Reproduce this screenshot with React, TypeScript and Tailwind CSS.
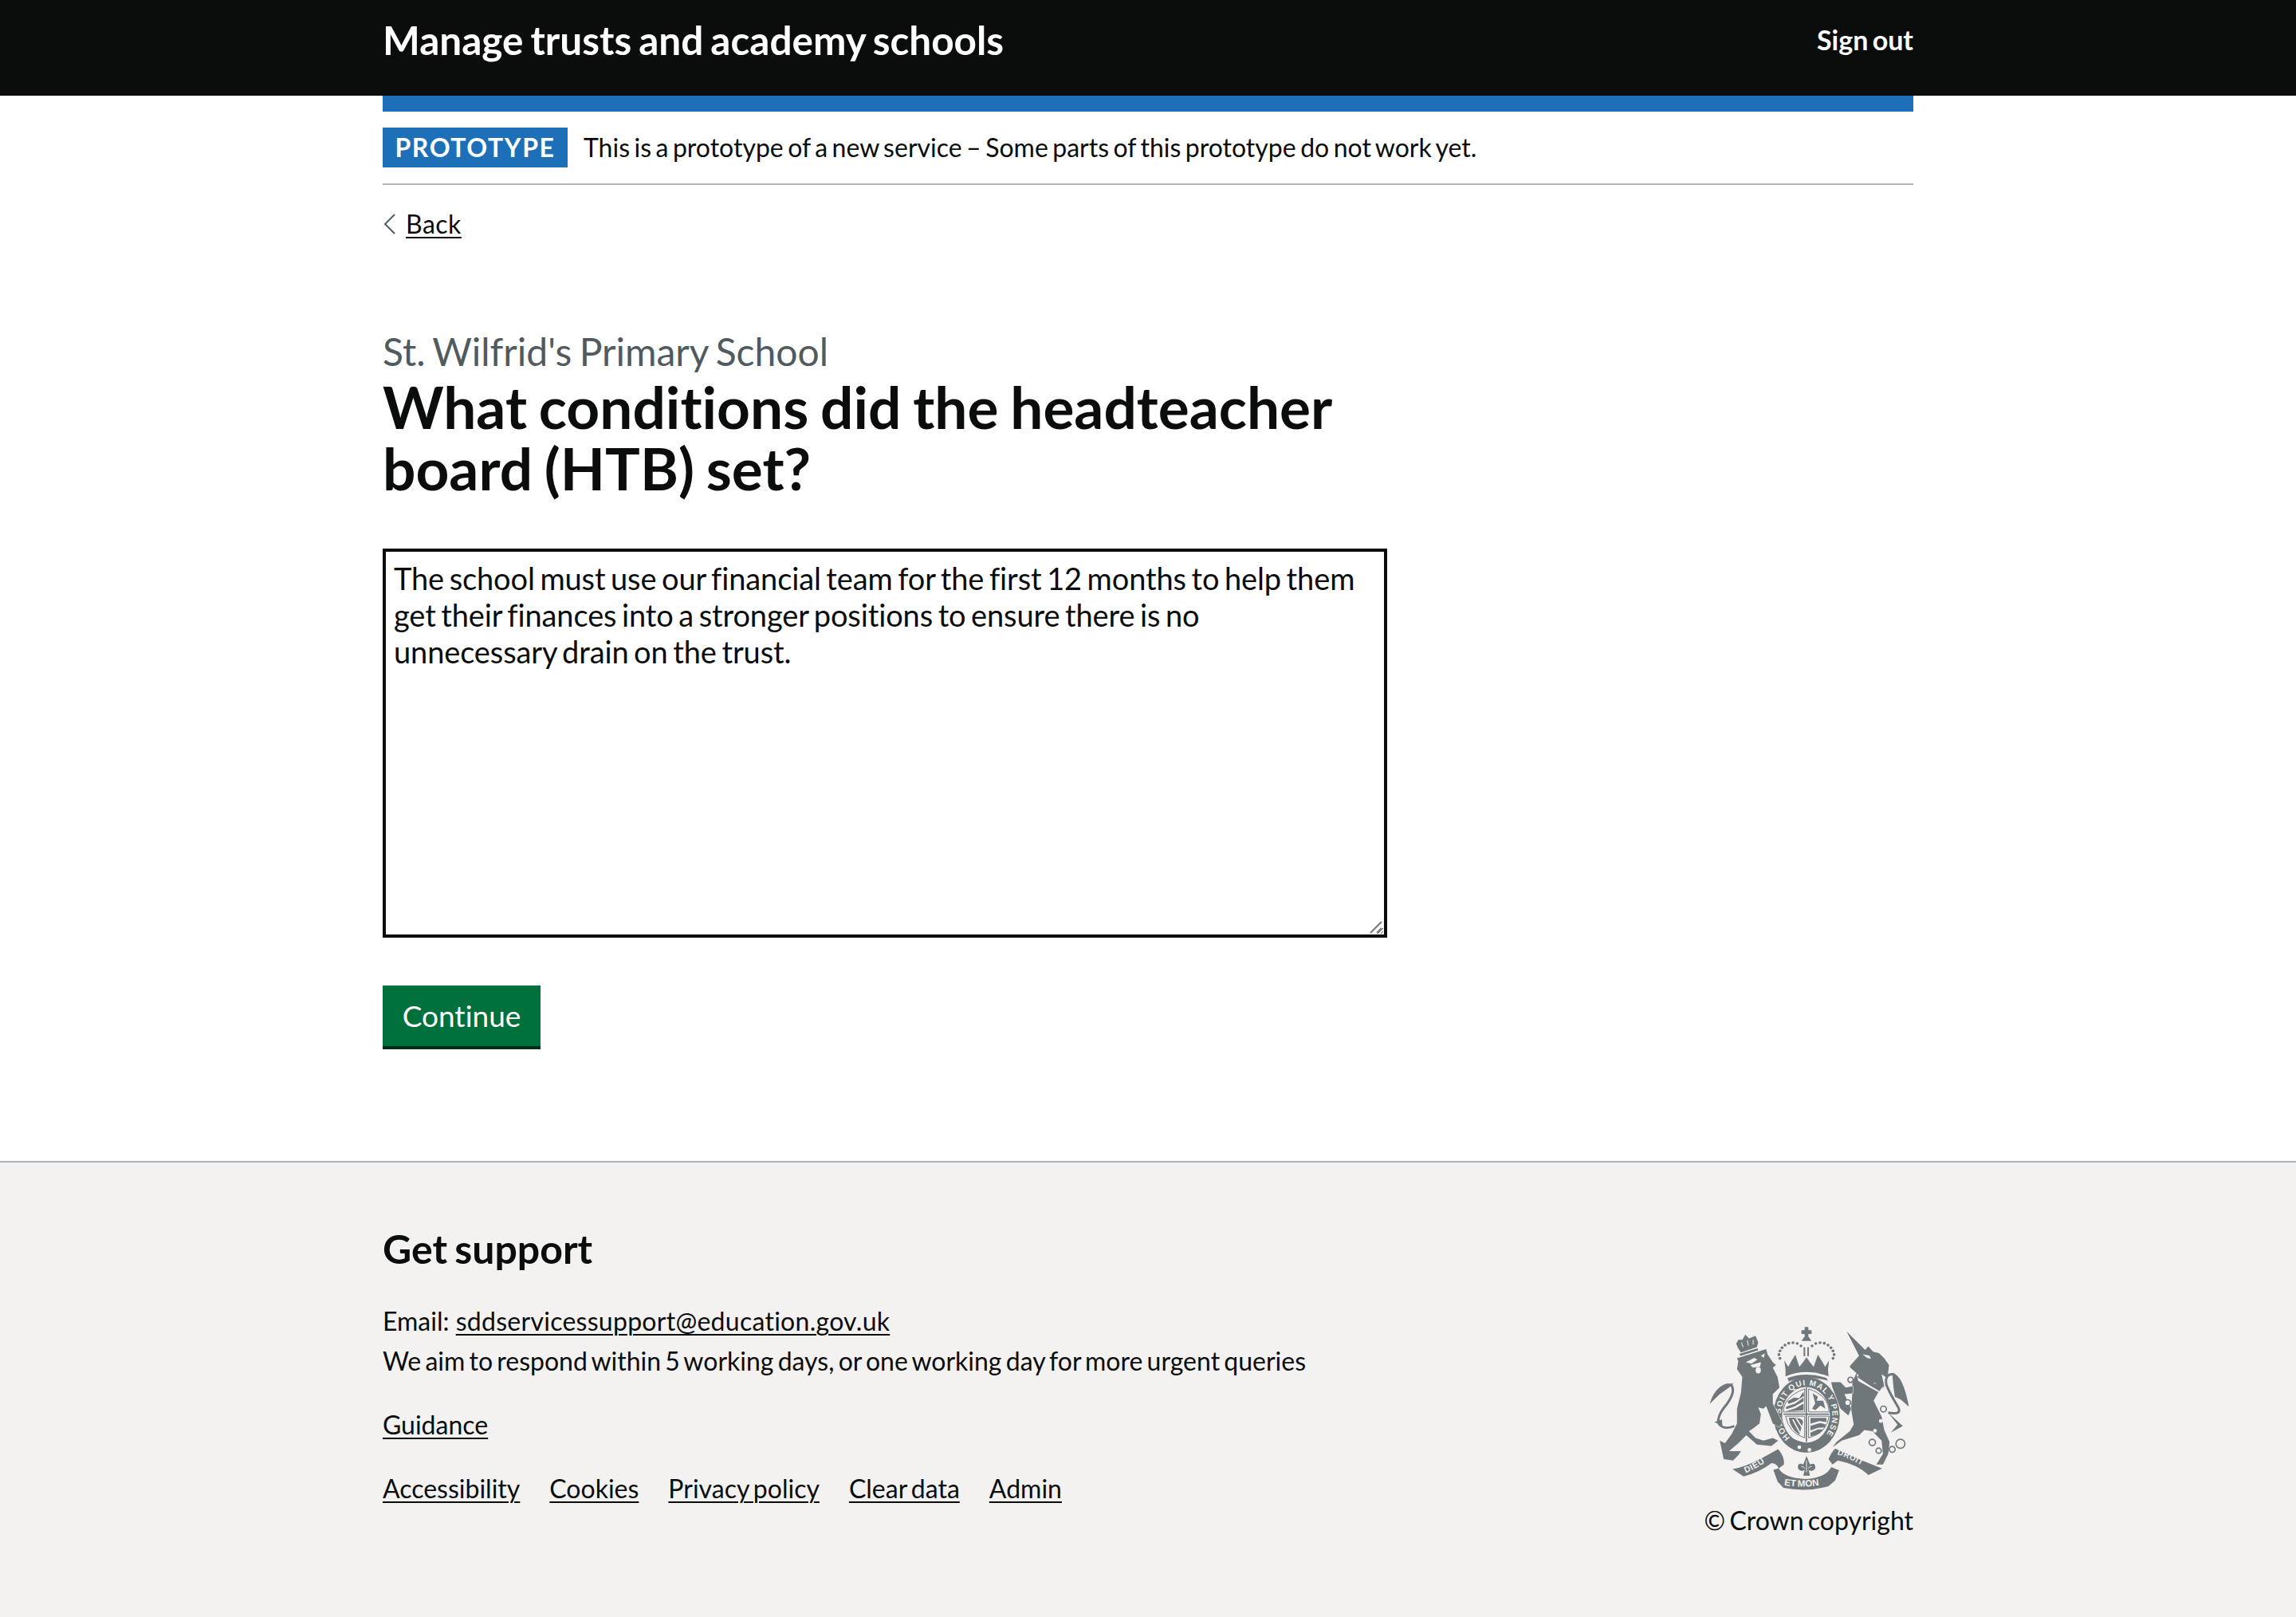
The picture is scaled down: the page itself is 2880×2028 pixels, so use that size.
import React from "react";

const G = "#6f777b";
const BG = "#f3f2f1";
const LABEL = "Liberation Sans, sans-serif";

function Crest() {
  return (
    <svg viewBox="125 65 765 625" className="w-[255px] h-[208px] block mr-[3px]" fill={G}>
      <defs>
        <path id="garter" d="M435 489 A97 112 0 1 1 560 489" />
        <path id="dieu" d="M268 622 Q320 600 372 560" />
        <path id="droit" d="M612 552 Q670 570 735 612" />
        <path id="etmon" d="M412 668 Q497 682 586 660" />
      </defs>

      {/* shield garter */}
      <ellipse cx="497" cy="403" rx="125" ry="142" />
      <ellipse cx="495" cy="403" rx="90" ry="105" fill={BG} />
      <text fontFamily={LABEL} fontWeight="700" fontSize="30" fill={BG}>
        <textPath href="#garter" textLength="500" lengthAdjust="spacing">HONI SOIT QUI MAL Y PENSE</textPath>
      </text>

      {/* shield quarters */}
      <path d="M410 392 Q410 335 490 305 V392 Z" fill="none" stroke={G} strokeWidth="3" />
      <path d="M425 352 L450 338 L470 340 L485 316 L488 332 L455 352 L430 362 Z M420 372 L455 360 L486 338 V352 L450 372 L420 382 Z M418 390 L455 378 L486 360 V386 Z" />
      <path d="M505 305 Q580 330 582 392 H505 Z" fill="none" stroke={G} strokeWidth="3" />
      <path d="M520 322 L540 335 L535 350 L560 350 L568 380 L550 368 L530 385 L518 380 L530 360 Z" />
      <path d="M418 408 H490 V490 Q430 470 418 408 Z" fill="none" stroke={G} strokeWidth="3" />
      <path d="M430 414 Q482 410 484 430 L470 478 Q436 455 430 414 Z" />
      <path d="M445 420 L472 470 M458 415 L480 450" stroke={BG} strokeWidth="5" fill="none" />
      <path d="M505 408 H582 Q575 470 505 490 Z" fill="none" stroke={G} strokeWidth="3" />
      <path d="M512 414 H572 V430 L545 426 L512 436 Z M512 444 L548 434 L568 438 V450 L540 452 L512 462 Z M512 470 L540 458 L560 458 L546 474 L512 484 Z" />
      <rect x="494" y="300" width="5" height="205" />
      <rect x="410" y="398" width="172" height="5" />

      {/* garter buckle */}
      <path d="M425 498 L440 490 Q497 520 560 505 L575 512 Q510 560 450 535 Z" />
      <circle cx="470" cy="525" r="7" fill={BG} />
      <circle cx="508" cy="535" r="7" fill={BG} />

      {/* main crown */}
      <path d="M490 72 H504 V84 H516 V98 H504 V108 L516 124 H478 L490 108 V98 H478 V84 H490 Z" />
      <rect x="486" y="148" width="6" height="34" />
      <rect x="500" y="148" width="6" height="34" />
      {[[397,190],[393,176],[397,162],[405,150],[416,140],[430,133],[446,131],[462,134],[476,143],[518,143],[532,134],[548,131],[564,133],[578,140],[589,150],[597,162],[601,176],[597,190]].map(([x, y], i) => (
        <circle key={i} cx={x} cy={y} r="5.5" />
      ))}
      <path d="M413 198 L428 222 L440 200 L455 176 L470 222 L484 205 L497 186 L510 205 L524 222 L540 176 L555 200 L567 222 L582 198 L578 232 L580 258 Q497 225 418 258 L418 232 Z" />
      <path d="M425 264 Q497 238 572 264 L578 274 Q497 252 430 277 Z" />

      {/* lion crown */}
      <path d="M232 135 L240 120 L255 120 L267 100 L280 115 L305 105 L315 130 L310 148 L250 168 L238 150 Z" />
      <path d="M244 173 L312 152 L315 160 L248 181 Z" />
      <path d="M252 130 L258 148 M274 122 L278 142 M296 120 L296 138" stroke={BG} strokeWidth="3" fill="none" />

      {/* lion */}
      <path
        d="M235 190 L345 155 L350 175 L370 205 L382 215 L370 225 L388 260 L395 300 L370 325 L370 360 L405 430 L395 450 L370 435 L345 370 L335 380 L315 375 L325 400 L320 435 L295 455 L280 465 L305 490 L335 500 L370 490 L390 500 L365 520 L310 515 L270 480 L240 510 L205 540 L250 540 L240 555 L220 575 L185 570 L170 500 L190 510 L215 475 L235 435 L235 380 L250 320 L255 260 L235 230 L240 200 Z"
        stroke={BG}
        strokeWidth="3"
        paintOrder="stroke"
      />
      <path d="M225 445 Q185 462 165 435" fill="none" stroke={G} strokeWidth="8" />
      <path d="M150 430 L178 420 L180 445 Z" />
      <path d="M165 435 Q160 405 195 365 Q235 310 210 288" fill="none" stroke={G} strokeWidth="9" />
      <path d="M132 362 Q150 300 195 285 L222 285 L205 300 L170 325 Z" />
      <path d="M268 205 L300 188 L312 195 L290 210 Z M325 180 L340 172 L336 188 Z" fill={BG} />
      <path d="M285 215 L325 205 L322 222 L295 225 Z" fill={BG} />
      <ellipse cx="315" cy="235" rx="10" ry="12" fill={BG} />

      {/* unicorn */}
      <path
        d="M648 88 L718 158 L730 145 L748 165 L770 170 L790 190 L808 215 L802 265 L780 250 L790 295 L765 322 L750 350 L780 410 L790 460 L810 505 L805 550 L785 590 L760 590 L785 550 L780 500 L745 465 L715 460 L695 480 L630 500 L595 525 L610 505 L660 465 L675 440 L670 410 L665 380 L670 320 L670 280 L685 245 L662 225 L660 220 L695 180 Z"
        stroke={BG}
        strokeWidth="3"
        paintOrder="stroke"
      />
      <path d="M590 280 L625 280 L645 300 L672 295 L672 322 L640 325 L665 380 L655 405 L625 380 L595 300 Z" stroke={BG} strokeWidth="3" paintOrder="stroke" />
      <path d="M686 248 L785 298 L772 320 L692 275 Z" fill={BG} />
      <path d="M690 262 L695 245 L708 256 L722 255 L730 270 L748 268 L752 285 L770 285 L783 297 L772 314 L740 295 Z" />
      <path d="M708 175 L735 180 L740 192 L725 188 Z" fill={BG} />
      <path d="M828 250 Q790 245 798 290 Q810 320 840 370 Q862 405 805 395" fill="none" stroke={G} strokeWidth="9" />
      <path d="M820 245 Q860 250 883 372 L852 345 L830 335 L825 300 Z" />
      <path d="M805 395 L860 445 L815 470 L840 440 Z" />
      {[[663, 271, 10], [652, 357, 11], [787, 381, 11]].map(([x, y, r], i) => (
        <circle key={i} cx={x} cy={y} r={r} fill={BG} stroke={G} strokeWidth="5" />
      ))}
      <circle cx="777" cy="426" r="7" fill={BG} />
      <circle cx="755" cy="463" r="7" fill={BG} />
      {[[745, 507, 12], [769, 538, 10], [820, 533, 11], [851, 512, 17]].map(([x, y, r], i) => (
        <circle key={i} cx={x} cy={y} r={r} fill="none" stroke={G} strokeWidth="5" />
      ))}

      {/* ribbons */}
      <path d="M218 607 Q265 600 330 565 L390 532 Q415 560 412 590 L392 605 Q385 585 365 585 Q320 620 260 635 Z" />
      <path d="M580 570 Q590 545 605 530 Q690 570 782 605 L730 630 Q690 590 615 575 L595 590 Z" />
      <path d="M372 610 L392 604 Q410 640 497 645 Q570 640 590 600 L620 612 L605 650 L580 672 Q497 695 410 678 L388 655 Z" />
      <text fontFamily={LABEL} fontWeight="700" fontSize="32" fill={BG} letterSpacing="2">
        <textPath href="#dieu">DIEU</textPath>
      </text>
      <text fontFamily={LABEL} fontWeight="700" fontSize="30" fill={BG} letterSpacing="2">
        <textPath href="#droit">DROIT</textPath>
      </text>
      <text fontFamily={LABEL} fontWeight="700" fontSize="35" fill={BG}>
        <textPath href="#etmon">ET MON</textPath>
      </text>

      {/* fleur */}
      <path d="M497 558 L510 590 Q532 580 530 605 Q520 620 505 610 L510 632 H485 L490 610 Q475 620 465 605 Q462 580 485 590 Z" />
      <path d="M497 575 V620 M478 598 Q486 596 490 605 M516 598 Q508 596 504 605" stroke={BG} strokeWidth="3" fill="none" />
    </svg>
  );
}

const link = "underline decoration-2 underline-offset-[4px]";

export default function App() {
  return (
    <div className="min-h-[2028px] flex flex-col bg-white text-[#0b0c0c] font-['Lato','Liberation_Sans',sans-serif] [font-variant-ligatures:none] [word-spacing:-3px]">
      <header className="bg-[#0b0c0c] h-[120px] shrink-0">
        <div className="w-[1920px] mx-auto flex items-start justify-between pt-[20px]">
          <span className="text-white font-bold text-[49.5px] leading-[60px]">Manage trusts and academy schools</span>
          <span className="text-white font-bold text-[34px] leading-[60px]">Sign out</span>
        </div>
      </header>
      <main className="w-[1920px] mx-auto shrink-0">
        <div className="h-[20px] bg-[#1d70b8]" />
        <div className="pt-[20px] pb-[20px] border-b-2 border-[#b1b4b6] flex items-center gap-[20px] h-[92px]">
          <span className="bg-[#1d70b8] text-white font-bold text-[32px] leading-[50px] h-[50px] w-[232px] text-center tracking-[1.6px]">PROTOTYPE</span>
          <span className="text-[32px] leading-[50px] [word-spacing:-2.7px]">This is a prototype of a new service – Some parts of this prototype do not work yet.</span>
        </div>
        <a className="mt-[29px] ml-[1px] flex items-center gap-[12px] text-[32px] leading-[40px]">
          <svg width="16" height="26" viewBox="0 0 16 26" fill="none" stroke="#505a5f" strokeWidth="2"><path d="M14 1 L2 13 L14 25" /></svg>
          <span className={`${link} tracking-[0.5px]`}>Back</span>
        </a>
        <p className="mt-[110px] text-[48px] leading-[60px] text-[#505a5f]">St. Wilfrid's Primary School</p>
        <h1 className="font-bold text-[73px] leading-[77px] w-[1260px] mt-[1px]">What conditions did the headteacher board (HTB) set?</h1>
        <div className="relative mt-[62px] w-[1260px] h-[488px]">
          <textarea
            className="block w-full h-full border-4 border-[#0b0c0c] pl-[10px] pr-[30px] py-[10px] text-[38px] leading-[46px] outline-none resize tracking-[-0.12px] [font-variant-ligatures:none] [word-spacing:-3px]"
            defaultValue="The school must use our financial team for the first 12 months to help them get their finances into a stronger positions to ensure there is no unnecessary drain on the trust."
          />
          <svg className="absolute right-[4px] bottom-[4px] pointer-events-none" width="18" height="18" viewBox="0 0 18 18" fill="none" stroke="#777777" strokeWidth="2">
            <path d="M15 2 L1 16 M15 10 L9 16" />
          </svg>
        </div>
        <button className="block mt-[60px] w-[198px] h-[80px] bg-[#00703c] border-b-4 border-[#002d18] text-white text-[37px] leading-[76px] text-center">Continue</button>
      </main>
      <footer className="mt-[140px] bg-[#f3f2f1] border-t-2 border-[#b1b4b6] grow">
        <div className="w-[1920px] mx-auto pt-[78px] flex justify-between">
          <div>
            <h2 className="font-bold text-[50px] leading-[60px]">Get support</h2>
            <p className="mt-[36px] text-[32px] leading-[50px] [word-spacing:0px]">Email: <a className={`${link} tracking-[0.27px]`}>sddservicessupport@education.gov.uk</a></p>
            <p className="text-[32px] leading-[50px]">We aim to respond within 5 working days, or one working day for more urgent queries</p>
            <p className="mt-[30px] text-[32px] leading-[50px]"><a className={link}>Guidance</a></p>
            <div className="mt-[30px] flex gap-[37px] text-[32px] leading-[50px]">
              <a className={link}>Accessibility</a>
              <a className={link}>Cookies</a>
              <a className={link}>Privacy policy</a>
              <a className={link}>Clear data</a>
              <a className={link}>Admin</a>
            </div>
          </div>
          <div className="flex flex-col items-end pt-[126px]">
            <Crest />
            <span className="mt-[12px] text-[32px] leading-[50px]">© Crown copyright</span>
          </div>
        </div>
      </footer>
    </div>
  );
}
